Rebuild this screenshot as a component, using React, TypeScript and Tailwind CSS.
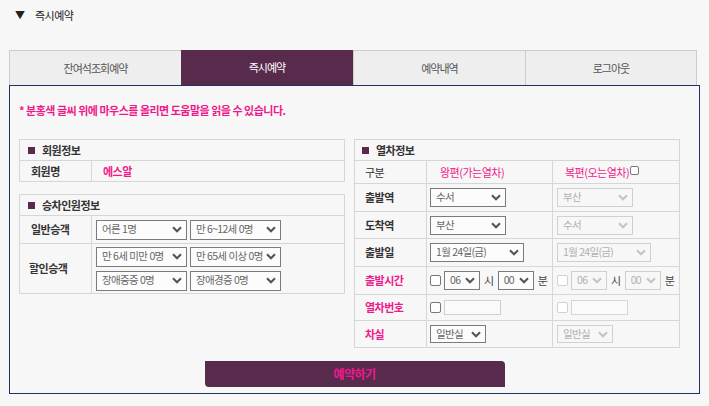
import React from "react";

const PINK = "text-[#f0198c]";

// 셀렉트 모양 (네이티브 select 대신 고정된 모양으로 그림)
function FakeSelect({
  text,
  w,
  h = 19,
  disabled = false,
}: {
  text: string;
  w: number;
  h?: number;
  disabled?: boolean;
}) {
  return (
    <div
      className={
        "flex items-center justify-between pl-[5px] pr-[4px] border text-[10.5px] tracking-[-0.7px] [word-spacing:0.5px] " +
        (disabled ? "border-[#d0d0d0] text-[#b0b0b0]" : "border-[#7b7b7b] text-[#666] bg-[#fcfcfc]")
      }
      style={{ width: w, height: h }}
    >
      <span className="whitespace-nowrap leading-none">{text}</span>
      <svg width="10" height="7" viewBox="0 0 10 7" className="shrink-0">
        <path
          d="M1 1.2 L5 5.2 L9 1.2"
          fill="none"
          stroke={disabled ? "#c4c4c4" : "#555"}
          strokeWidth="2.1"
        />
      </svg>
    </div>
  );
}

function Check({ disabled = false, small = false }: { disabled?: boolean; small?: boolean }) {
  return (
    <span
      className={
        "inline-block shrink-0 rounded-[2px] border bg-white " +
        (small ? "w-[9px] h-[9px] " : "w-[11px] h-[11px] ") +
        (disabled ? "border-[#d0d0d0]" : "border-[#777]")
      }
    />
  );
}

function SectionHead({ title, pl }: { title: string; pl: string }) {
  return (
    <div className={"flex items-center h-[21px] border-b border-[#d6d6d6] gap-[7px] " + pl}>
      <span className="w-[7px] h-[7px] bg-[#5a2a4c]" />
      <span className="font-bold text-[#333]">{title}</span>
    </div>
  );
}

const tabs = ["잔여석조회예약", "즉시예약", "예약내역", "로그아웃"];

export default function App() {
  return (
    <div
      className="w-[709px] h-[406px] bg-[#f7f7f7] text-[11px] tracking-[-0.5px] text-[#333] overflow-hidden"
      style={{ fontFamily: '"Noto Sans CJK KR", "Noto Sans", sans-serif' }}
    >
      {/* 상단 제목 */}
      <div className="h-[50px] flex items-start pt-[8px] pl-[15px] gap-[10px] text-[11px] text-[#222]">
        <span className="text-[10px] tracking-normal leading-[14px]">▼</span>
        <span className="leading-[14px]">즉시예약</span>
      </div>

      {/* 탭 */}
      <div className="mx-[9px] flex h-[35px] text-[11px] tracking-[-1px]">
        {tabs.map((t, i) =>
          i === 1 ? (
            <div key={t} className="w-[172px] flex items-center justify-center bg-[#582b4c] text-white">
              {t}
            </div>
          ) : (
            <div
              key={t}
              className={
                "w-[172px] flex items-center justify-center bg-[#eeeeee] border-t border-l border-[#cccccc] text-[#555] " +
                (i === 3 ? "border-r" : "")
              }
            >
              {t}
            </div>
          )
        )}
      </div>

      {/* 본문 */}
      <div className="mx-[9px] h-[309px] border border-[#1d3463] pt-[17px]">
        <p className={"pl-[9px] font-bold leading-[14px] " + PINK}>
          * 분홍색 글씨 위에 마우스를 올리면 도움말을 읽을 수 있습니다.
        </p>

        <div className="flex gap-[9px] pl-[9px] mt-[22px]">
          {/* 왼쪽 */}
          <div className="w-[326px] flex flex-col gap-[12px]">
            <div className="border border-[#d6d6d6]">
              <SectionHead title="회원정보" pl="pl-[8px]" />
              <div className="flex h-[20px]">
                <div className="w-[72px] border-r border-[#d6d6d6] pl-[11px] flex items-center font-bold">회원명</div>
                <div className={"pl-[11px] flex items-center font-bold " + PINK}>에스알</div>
              </div>
            </div>

            <div className="border border-[#d6d6d6]">
              <SectionHead title="승차인원정보" pl="pl-[8px]" />
              <div className="flex h-[28px] border-b border-[#d6d6d6]">
                <div className="w-[72px] border-r border-[#d6d6d6] pl-[11px] flex items-center font-bold">일반승객</div>
                <div className="pl-[4px] flex items-center gap-[3px]">
                  <FakeSelect text="어른 1명" w={91} h={20} />
                  <FakeSelect text="만 6~12세 0명" w={91} h={20} />
                </div>
              </div>
              <div className="flex h-[49px]">
                <div className="w-[72px] border-r border-[#d6d6d6] pl-[9px] flex items-center font-bold">할인승객</div>
                <div className="pl-[4px] flex flex-col justify-center gap-[4px]">
                  <div className="flex gap-[3px]">
                    <FakeSelect text="만 6세 미만 0명" w={91} h={20} />
                    <FakeSelect text="만 65세 이상 0명" w={91} h={20} />
                  </div>
                  <div className="flex gap-[3px]">
                    <FakeSelect text="장애중증 0명" w={91} h={20} />
                    <FakeSelect text="장애경증 0명" w={91} h={20} />
                  </div>
                </div>
              </div>
            </div>
          </div>

          {/* 오른쪽 */}
          <div className="w-[326px] border border-[#d6d6d6] self-start">
            <SectionHead title="열차정보" pl="pl-[7px]" />
            <TrainRow h="h-[23px]" label="구분" plain>
              <span className={"pl-[10px] " + PINK}>왕편(가는열차)</span>
              <span className={"pl-[8px] flex items-start gap-[1px] " + PINK}>
                <span>복편(오는열차)</span>
                <span className="mt-[-2px]">
                  <Check small />
                </span>
              </span>
            </TrainRow>
            <TrainRow h="h-[28px]" label="출발역">
              <FakeSelect text="수서" w={76} />
              <FakeSelect text="부산" w={76} disabled />
            </TrainRow>
            <TrainRow h="h-[27px]" label="도착역">
              <FakeSelect text="부산" w={76} />
              <FakeSelect text="수서" w={76} disabled />
            </TrainRow>
            <TrainRow h="h-[28px]" label="출발일">
              <FakeSelect text="1월 24일(금)" w={94} />
              <FakeSelect text="1월 24일(금)" w={94} disabled />
            </TrainRow>
            <TrainRow h="h-[28px]" label="출발시간" pink>
              <TimeCell />
              <TimeCell disabled />
            </TrainRow>
            <TrainRow h="h-[26px]" label="열차번호" pink>
              <div className="flex items-center gap-[3px]">
                <Check />
                <div className="w-[57px] h-[15px] border border-[#cfcfcf] bg-[#fafafa]" />
              </div>
              <div className="flex items-center gap-[3px]">
                <Check disabled />
                <div className="w-[57px] h-[15px] border border-[#d6d6d6] bg-[#fafafa]" />
              </div>
            </TrainRow>
            <TrainRow h="h-[26px]" label="차실" pink last>
              <FakeSelect text="일반실" w={56} h={18} />
              <FakeSelect text="일반실" w={56} h={18} disabled />
            </TrainRow>
          </div>
        </div>

        <div className="flex justify-center mt-[13px]">
          <button className="w-[300px] h-[26px] bg-[#582b4c] rounded-tr-[4px] rounded-bl-[4px] text-[#f0198c] font-bold text-[12px]">
            예약하기
          </button>
        </div>
      </div>
    </div>
  );
}

function TimeCell({ disabled = false }: { disabled?: boolean }) {
  return (
    <div className="flex items-center text-[#444]">
      <Check disabled={disabled} />
      <span className="ml-[3px]">
        <FakeSelect text="06" w={36} disabled={disabled} />
      </span>
      <span className="mx-[4px]">시</span>
      <FakeSelect text="00" w={36} disabled={disabled} />
      <span className="ml-[4px]">분</span>
    </div>
  );
}

function TrainRow({
  h,
  label,
  children,
  pink = false,
  plain = false,
  last = false,
}: {
  h: string;
  label: string;
  children: React.ReactNode;
  pink?: boolean;
  plain?: boolean;
  last?: boolean;
}) {
  const [a, b] = React.Children.toArray(children);
  return (
    <div className={"flex " + h + (last ? "" : " border-b border-[#d6d6d6]")}>
      <div
        className={
          "w-[72px] border-r border-[#d6d6d6] pl-[10px] flex items-center " +
          (plain ? "" : "font-bold ") +
          (pink ? PINK : "")
        }
      >
        {label}
      </div>
      <div className="w-[126px] border-r border-[#d6d6d6] pl-[3px] flex items-center">{a}</div>
      <div className="flex-1 pl-[4px] flex items-center">{b}</div>
    </div>
  );
}
